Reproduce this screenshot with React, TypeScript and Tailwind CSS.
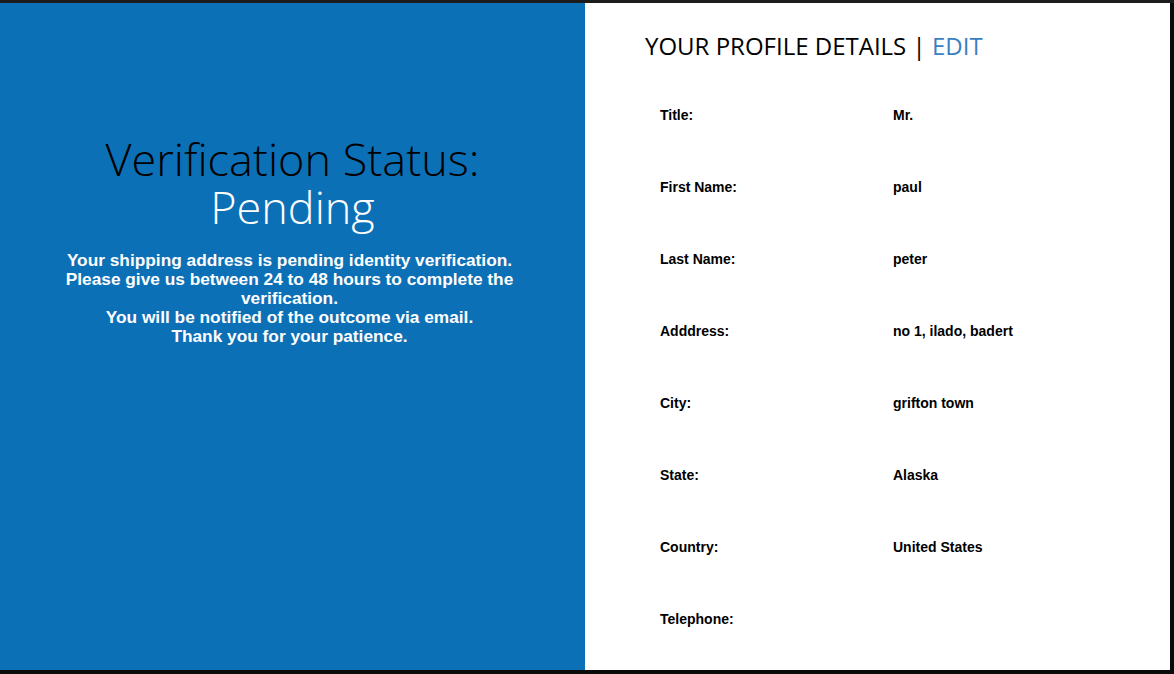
import React from 'react';

const rows = [
  { label: 'Title:', value: 'Mr.' },
  { label: 'First Name:', value: 'paul' },
  { label: 'Last Name:', value: 'peter' },
  { label: 'Adddress:', value: 'no 1, ilado, badert' },
  { label: 'City:', value: 'grifton town' },
  { label: 'State:', value: 'Alaska' },
  { label: 'Country:', value: 'United States' },
  { label: 'Telephone:', value: '' },
];

export default function App() {
  return (
    <div className="w-[1174px] h-[674px] bg-[#0a0a0a] flex flex-col overflow-hidden">
      <div className="h-[3px] bg-[#1c1c1c] shrink-0" />
      <div className="flex flex-1 min-h-0">
        {/* Status panel */}
        <section className="w-[585px] bg-[#0c70b7] flex flex-col items-center pt-[132px] text-center">
          <h1 className="font-['Open_Sans',sans-serif] font-light text-[45px] leading-[48px] text-black">
            <div>Verification Status:</div>
            <div className="text-white">Pending</div>
          </h1>
          <p className="mt-[20px] pr-[6px] font-['Liberation_Sans',Arial,sans-serif] font-bold text-[17.3px] leading-[19px] text-white">
            Your shipping address is pending identity verification.
            <br />
            Please give us between 24 to 48 hours to complete the
            <br />
            verification.
            <br />
            You will be notified of the outcome via email.
            <br />
            Thank you for your patience.
          </p>
        </section>

        {/* Profile panel */}
        <section className="w-[585px] bg-white pl-[60px] pt-[27px]">
          <h2 className="font-['Open_Sans',sans-serif] text-[24px] leading-[32px] text-black">
            YOUR PROFILE DETAILS | <span className="text-[#3b7fc4]">EDIT</span>
          </h2>
          <div className="mt-[45px] pl-[15px] font-['Liberation_Sans',Arial,sans-serif] font-bold text-[14px] text-black">
            {rows.map((r) => (
              <div key={r.label} className="flex h-[72px] leading-[16px]">
                <span className="w-[233px]">{r.label}</span>
                <span>{r.value}</span>
              </div>
            ))}
          </div>
        </section>
        <div className="flex-1 bg-[#0a0a0a]" />
      </div>
      <div className="h-[4px] bg-[#0a0a0a] shrink-0" />
    </div>
  );
}
